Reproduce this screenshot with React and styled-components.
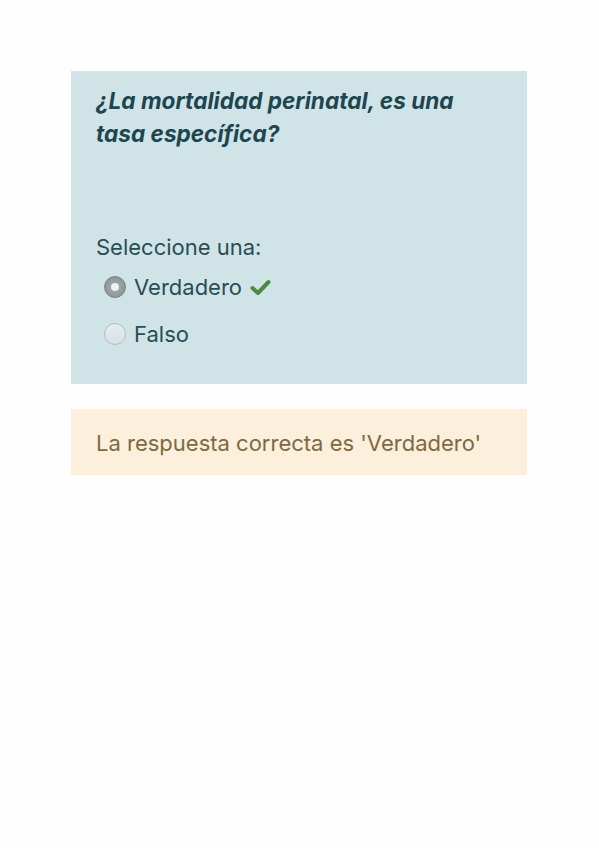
import React from 'react';
import styled, {createGlobalStyle} from 'styled-components';

const Global = createGlobalStyle`
  body {
    margin: 0;
    background: #fefefe;
    font-family: Inter, "Liberation Sans", Arial, sans-serif;
  }
`;

const Page = styled.div`
  padding: 71px 72px 0 71px;
  display: flex;
  flex-direction: column;
  gap: 25px;
`;

const QuestionBox = styled.div`
  background: #d0e4e8;
  padding: 13px 25px 36px;
  color: #1e4650;
`;

const Title = styled.h2`
  margin: 0;
  font-size: 22.6px;
  font-weight: 700;
  font-style: italic;
  line-height: 33px;
  max-width: 400px;
`;

const Prompt = styled.div`
  margin-top: 83px;
  font-size: 22px;
  line-height: 28px;
  color: #2a4d55;
`;

const Options = styled.div`
  margin-top: 12px;
  display: flex;
  flex-direction: column;
  gap: 19px;
  padding-left: 8px;
`;

const Option = styled.label`
  display: flex;
  align-items: center;
  gap: 8px;
  font-size: 22px;
  line-height: 28px;
  color: #2a4d55;
`;

const Radio = styled.span`
  width: 22px;
  height: 22px;
  border-radius: 50%;
  box-sizing: border-box;
  display: inline-flex;
  align-items: center;
  justify-content: center;
  background: ${p =>
    p.checked
      ? 'radial-gradient(circle, #9aa2a3 40%, #848d8f 100%)'
      : 'linear-gradient(#e6edef, #d6e1e3)'};
  border: 1px solid ${p => (p.checked ? '#7a8385' : '#b2bec1')};
  &::after {
    content: '';
    width: 8px;
    height: 8px;
    border-radius: 50%;
    background: #eef2f3;
    display: ${p => (p.checked ? 'block' : 'none')};
  }
`;

const Check = styled.svg`
  width: 21px;
  height: 17px;
`;

const Feedback = styled.div`
  background: #fcefdc;
  color: #7d6a45;
  padding: 20px 25px 18px;
  font-size: 22px;
  line-height: 28px;
`;

export default function App() {
  return (
    <>
      <Global />
      <Page>
        <QuestionBox>
          <Title>¿La mortalidad perinatal, es una tasa específica?</Title>
          <Prompt>Seleccione una:</Prompt>
          <Options>
            <Option>
              <Radio checked />
              Verdadero
              <Check viewBox="0 0 21 17">
                <path d="M2.5 9 L8 14 L18.5 3" fill="none" stroke="#4b8a3f" strokeWidth="4" strokeLinecap="round" strokeLinejoin="round" />
              </Check>
            </Option>
            <Option>
              <Radio />
              Falso
            </Option>
          </Options>
        </QuestionBox>
        <Feedback>La respuesta correcta es 'Verdadero'</Feedback>
      </Page>
    </>
  );
}
